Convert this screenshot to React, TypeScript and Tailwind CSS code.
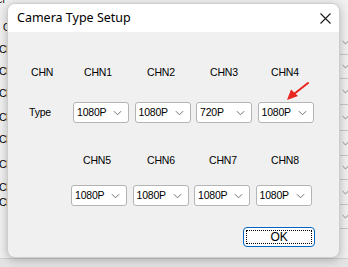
import React from 'react';

const body = { fontFamily: '"Liberation Sans", Arial, sans-serif' };
const title = { fontFamily: '"Noto Sans", "Open Sans", sans-serif' };

function Chevron({ size = 9 }: { size?: number }) {
  return (
    <svg width={size} height={Math.round(size / 2) + 1} viewBox="0 0 10 6" className="shrink-0 text-[#606060]">
      <path d="M1 1 L5 5 L9 1" fill="none" stroke="currentColor" strokeWidth="1" />
    </svg>
  );
}

function Combo({ value }: { value: string }) {
  return (
    <div className="flex h-[21px] w-[56px] items-center justify-between rounded-[3px] border border-[#b4b4b4] bg-white pl-[3px] pr-[6px] text-[10.5px] tracking-[-0.2px] text-black">
      <span>{value}</span>
      <Chevron />
    </div>
  );
}

const leftRows = [48, 70, 92, 116, 138, 163, 186, 201];
const rightRows = [37, 62, 86, 112, 138, 163, 187, 212, 236];

export default function App() {
  return (
    <div className="relative h-[267px] w-[348px] overflow-hidden bg-[#e4e4e4]" style={body}>
      {/* window behind the dialog */}
      <div className="absolute left-0 top-0 h-[258px] w-[348px] bg-[#f0f0f0]">
        <span className="absolute left-[-3px] top-[-5px] text-[10px] leading-[10px] text-black">el</span>
        <span className="absolute left-[3px] top-[20px] text-[10px] text-black">C</span>
        {leftRows.map((y) => (
          <span key={y} className="absolute left-[-1px] text-[10.5px] tracking-[-0.5px] text-black" style={{ top: y - 6 }}>
            CH
          </span>
        ))}
        <div className="absolute right-0 top-[30px] flex w-[10px] flex-col border-l border-[#c8c8c8]">
          {rightRows.slice(0, -1).map((y, i) => (
            <div
              key={y}
              className="flex items-center border-b border-[#c8c8c8] pl-[3px]"
              style={{ height: rightRows[i + 1] - y }}
            >
              <Chevron size={7} />
            </div>
          ))}
        </div>
      </div>
      <div className="absolute left-0 top-[258px] h-[1px] w-[348px] bg-[#cfcfcf]" />

      {/* dialog */}
      <div className="absolute left-[7px] top-[3px] flex h-[255px] w-[333px] flex-col overflow-hidden rounded-[8px] border border-[#cdcdcd] bg-[#f0f0f0] shadow-[0_2px_10px_rgba(0,0,0,0.25)]">
        <div className="flex h-[28px] items-center justify-between bg-white pl-[9px] pr-[8px]">
          <span className="text-[12.5px] text-black" style={title}>
            Camera Type Setup
          </span>
          <svg width="11" height="11" viewBox="0 0 11 11">
            <path d="M0.5 0.5 L10.5 10.5 M10.5 0.5 L0.5 10.5" stroke="#1a1a1a" strokeWidth="1.1" />
          </svg>
        </div>

        <div className="relative flex flex-col text-[10.5px] leading-[13px] tracking-[-0.2px] text-black">
          <div className="mt-[34px] flex h-[13px]">
            <span className="ml-[23px] w-[53px]">CHN</span>
            <span className="w-[63px]">CHN1</span>
            <span className="w-[63px]">CHN2</span>
            <span className="w-[61px]">CHN3</span>
            <span>CHN4</span>
          </div>

          <div className="mt-[23px] flex h-[21px] items-center">
            <span className="ml-[21px] w-[44px]">Type</span>
            <div className="flex gap-x-[5.5px]">
              <Combo value="1080P" />
              <Combo value="1080P" />
              <Combo value="720P" />
              <Combo value="1080P" />
            </div>
          </div>

          <div className="mt-[31px] flex h-[13px]">
            <span className="ml-[75px] w-[64px]">CHN5</span>
            <span className="w-[62px]">CHN6</span>
            <span className="w-[62px]">CHN7</span>
            <span>CHN8</span>
          </div>

          <div className="ml-[63px] mt-[18px] flex gap-x-[5.5px]">
            <Combo value="1080P" />
            <Combo value="1080P" />
            <Combo value="1080P" />
            <Combo value="1080P" />
          </div>

          <div className="ml-[235px] mt-[21px] flex h-[20px] w-[72px] items-center justify-center rounded-[4px] border border-[#0067c0] bg-[#fdfdfd]">
            <div className="flex h-[14px] w-[66px] items-center justify-center border border-dotted border-black text-[12px]">
              OK
            </div>
          </div>

          {/* annotation arrow */}
          <svg className="absolute left-[278px] top-[50px]" width="24" height="20" viewBox="0 0 24 20">
            <path d="M22 1 L8 12" stroke="#e8251f" strokeWidth="2" strokeLinecap="round" />
            <path d="M1 18 L5 7.5 L12 14 Z" fill="#e8251f" />
          </svg>
        </div>
      </div>
    </div>
  );
}
